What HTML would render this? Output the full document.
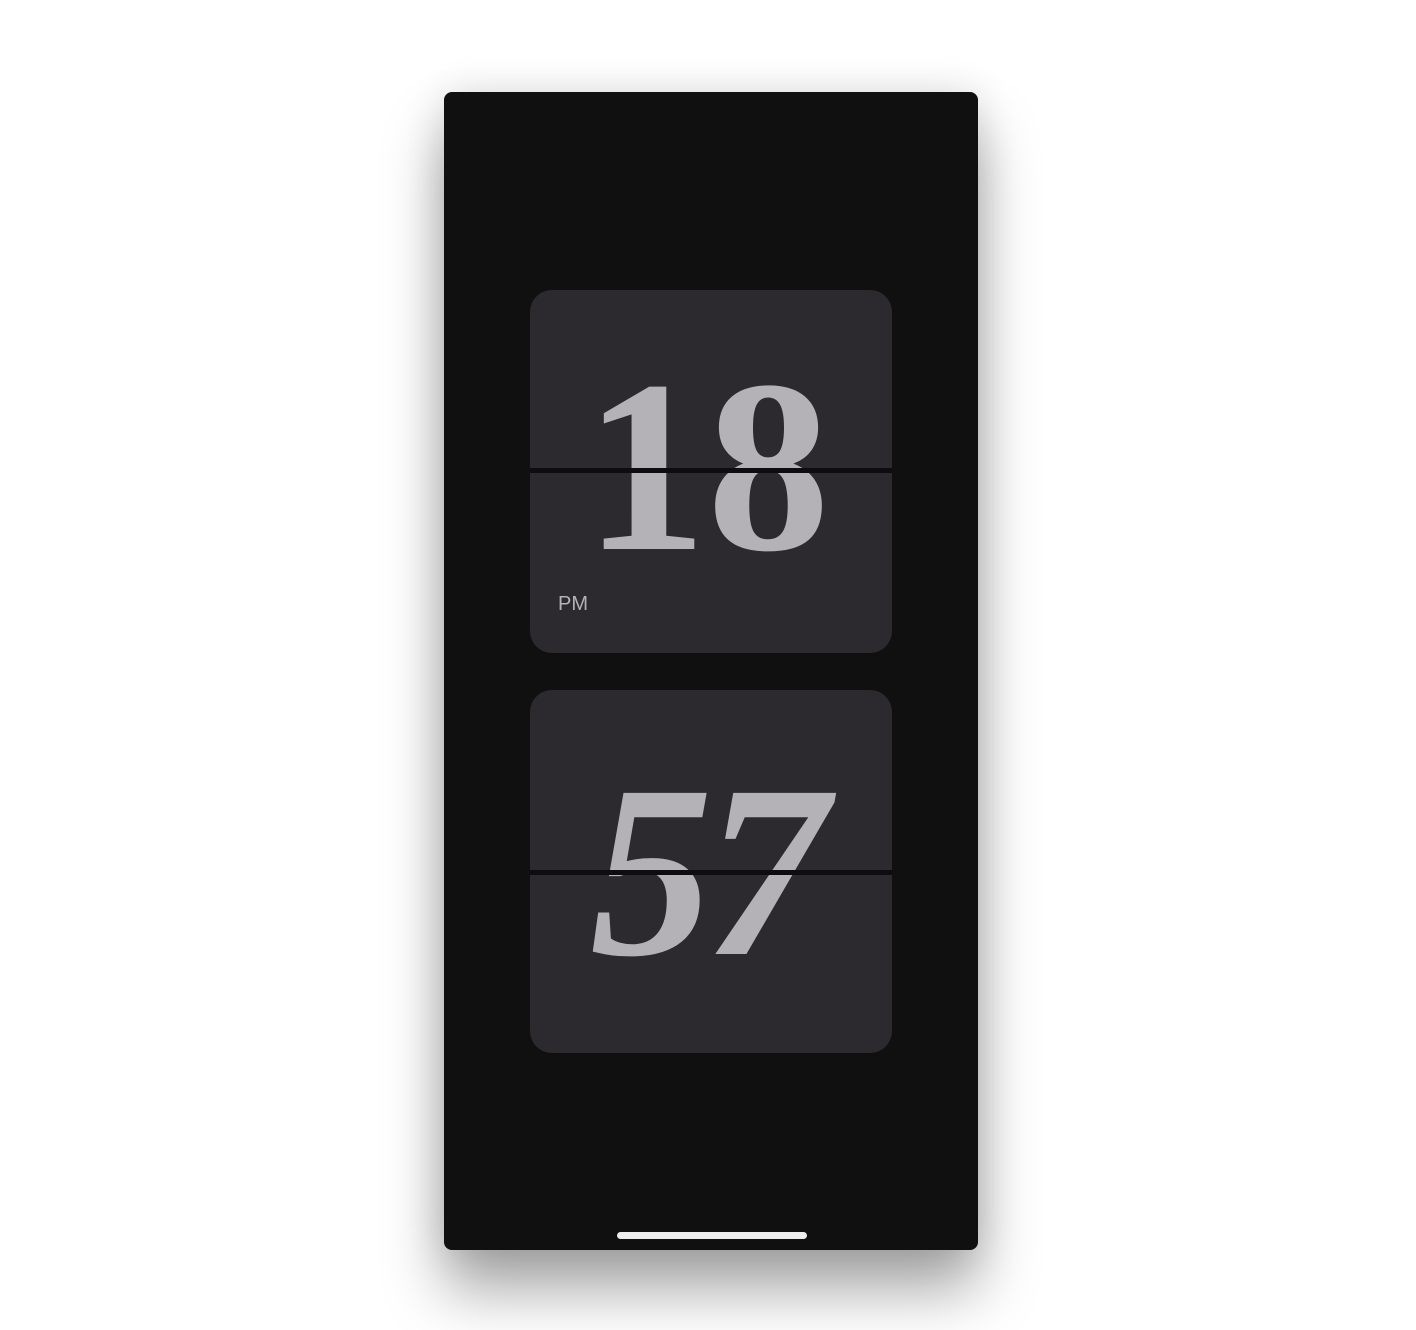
<!DOCTYPE html>
<html><head><style>
body{margin:0;width:1416px;height:1330px;background:#fff;position:relative;overflow:hidden}
.phone{position:absolute;left:444px;top:92px;width:534px;height:1158px;background:#101011;border-radius:8px;box-shadow:0 40px 60px rgba(0,0,0,0.35),0 0 40px rgba(0,0,0,0.12)}
.card{position:absolute;left:86px;width:362px;height:363px;background:#2c2a2e;border-radius:22px;overflow:hidden}
.d{position:absolute;left:0;width:100%;text-align:center;font-family:"Liberation Serif",serif;font-weight:bold;color:#b4b2b7;font-size:246px;line-height:1;letter-spacing:-8px}
.line{position:absolute;left:0;width:100%;height:5px;background:#0d0c0e}
.pm{position:absolute;left:28px;top:303px;font-family:"Liberation Sans",sans-serif;font-size:20px;color:#b4b2b7}
.home{position:absolute;left:173px;width:190px;height:7px;border-radius:4px;background:#eee}
</style></head><body>
<div class="phone">
 <div class="card" style="top:198px">
  <div class="d" style="top:54px;left:-4px;letter-spacing:0">18</div>
  <div class="line" style="top:178px"></div>
  <div class="pm">PM</div>
 </div>
 <div class="card" style="top:598px">
  <div class="d" style="top:59px;left:-6px;font-style:italic">57</div>
  <div class="line" style="top:180px"></div>
 </div>
 <div class="home" style="top:1140px"></div>
</div>
</body></html>
